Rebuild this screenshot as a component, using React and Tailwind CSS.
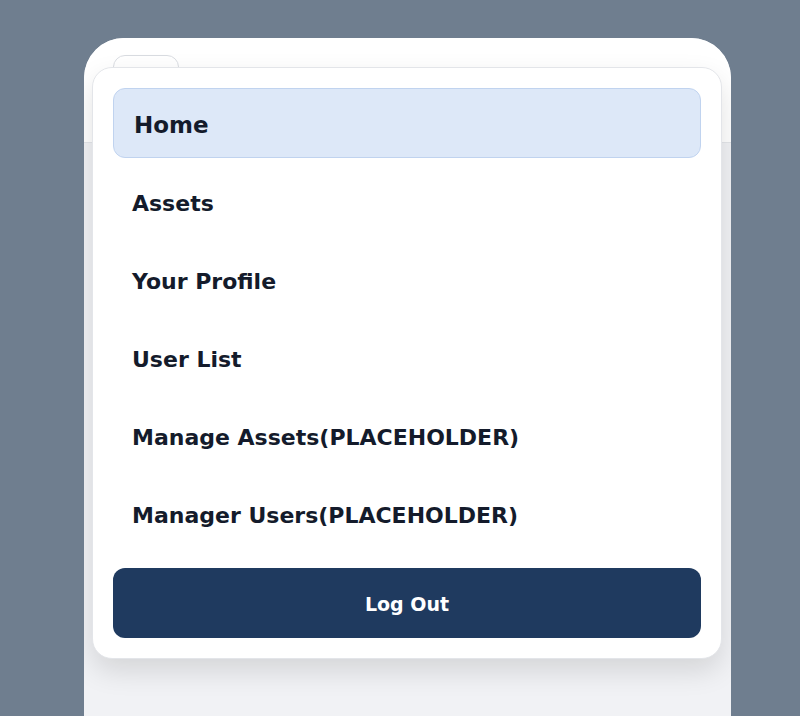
import React from 'react';

const menuItems = [
  { label: 'Home', active: true },
  { label: 'Assets' },
  { label: 'Your Profile' },
  { label: 'User List' },
  { label: 'Manage Assets(PLACEHOLDER)' },
  { label: 'Manager Users(PLACEHOLDER)' },
];

export default function App() {
  return (
    <div className="h-[716px] w-[800px] overflow-hidden bg-[#6f7e8f] pt-[38px] pl-[84px]">
      {/* App frame */}
      <div className="relative flex h-[700px] w-[647px] flex-col overflow-hidden rounded-t-[40px] bg-[#f1f2f5]">
        {/* Header */}
        <div className="h-[105px] border-b border-[#e4e6ea] bg-white px-[29px] pt-[17px]">
          <div className="h-[40px] w-[66px] rounded-[12px] border border-[#d9dce1] bg-white"></div>
        </div>

        {/* Dropdown menu */}
        <div
          className="absolute top-[29px] left-[8px] w-[630px] rounded-[20px] border border-[#e3e5e9] bg-white px-[20px] pt-[20px] pb-[20px] shadow-[0_12px_28px_rgba(0,0,0,0.12)]"
          style={{ fontFamily: '"DejaVu Sans", Verdana, sans-serif' }}
        >
          <nav className="flex flex-col gap-[9px]">
            {menuItems.map((item) => (
              <div
                key={item.label}
                className={
                  item.active
                    ? 'flex h-[70px] items-center rounded-[12px] border border-[#c0d3ef] bg-[#dde8f8] px-[20px] pt-[4px] text-[23px] font-bold text-[#141b2b]'
                    : 'flex h-[69px] items-center rounded-[12px] border border-transparent px-[18px] pt-[4px] text-[22px] font-bold text-[#141b2b]'
                }
              >
                {item.label}
              </div>
            ))}
          </nav>

          <button className="mt-[20px] flex h-[70px] w-full items-center justify-center rounded-[12px] bg-[#1f3a5f] pt-[2px] text-[19px] font-bold text-white">
            Log Out
          </button>
        </div>
      </div>
    </div>
  );
}
